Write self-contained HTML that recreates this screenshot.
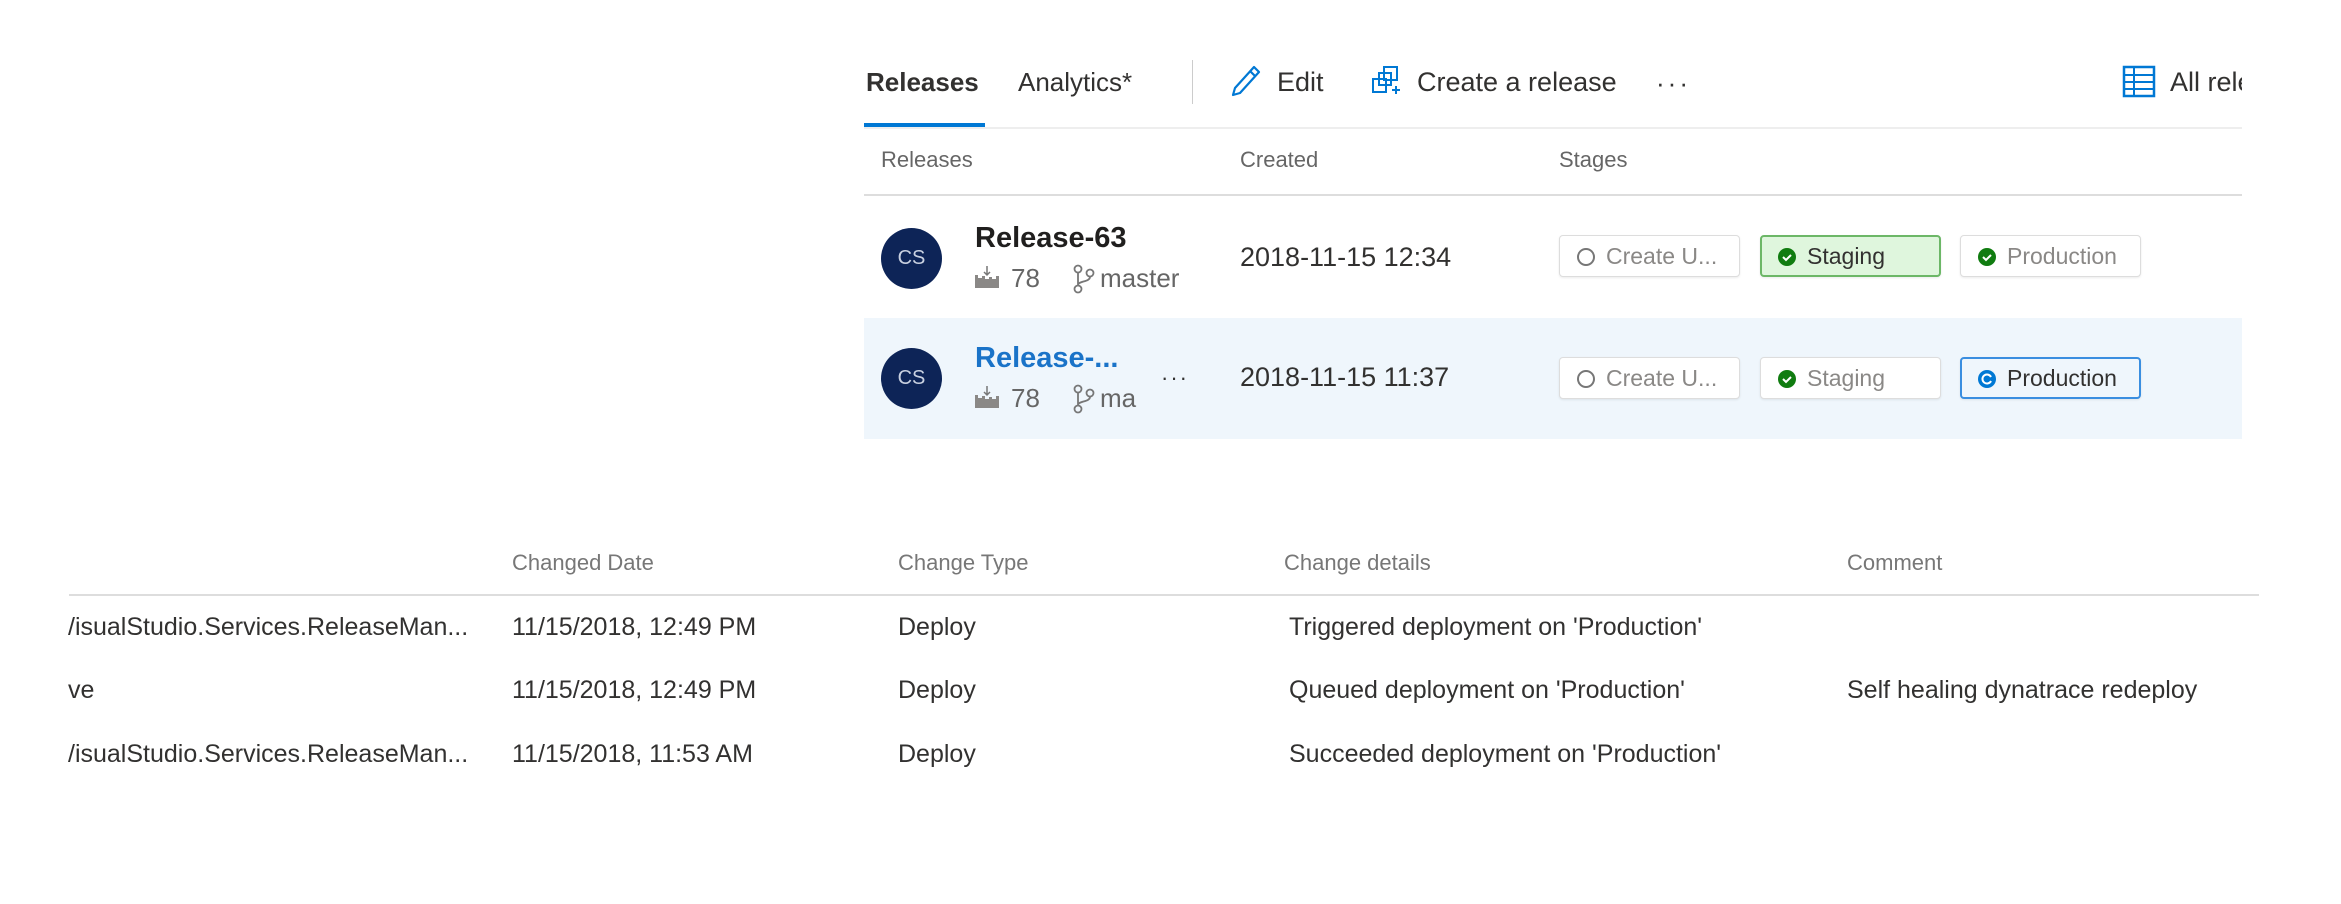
<!DOCTYPE html>
<html><head><meta charset="utf-8"><style>
body{margin:0;width:2341px;height:904px;background:#fff;position:relative;overflow:hidden;font-family:"Liberation Sans",sans-serif;color:#323130}
.a{position:absolute;white-space:nowrap}
.pill{position:absolute;height:42px;width:181px;border:1px solid #ddd;border-radius:4px;background:#fff;box-sizing:border-box;box-shadow:0 1px 2px rgba(0,0,0,.08)}
.pill span{position:absolute;left:46px;top:0;line-height:40px;font-size:23px;color:#8a8886}
.pill svg{position:absolute;left:16px;top:11px}
.hd{font-size:22px;color:#777}
.bt{font-size:25px;color:#323130}
</style></head><body>
<div class="a" style="left:866px;top:65px;font-size:26px;font-weight:bold;line-height:34px">Releases</div>
<div style="position:absolute;left:864px;top:123px;width:121px;height:4px;background:#0078d4"></div>
<div class="a" style="left:1018px;top:65px;font-size:26px;line-height:34px">Analytics*</div>
<div style="position:absolute;left:1192px;top:60px;width:1px;height:44px;background:#ccc"></div>
<svg class="a" style="left:1230px;top:64px" width="32" height="34" viewBox="0 0 32 34"><path d="M24 3l5 5L10 29l-7 2 2-7z M20 7l5 5" fill="none" stroke="#0078d4" stroke-width="2.2" stroke-linejoin="round"/></svg>
<div class="a" style="left:1277px;top:65px;font-size:27px;line-height:34px">Edit</div>
<svg class="a" style="left:1370px;top:64px" width="34" height="36" viewBox="0 0 34 36"><rect x="14" y="3" width="13" height="13" fill="none" stroke="#0078d4" stroke-width="2"/><rect x="3" y="15" width="13" height="13" fill="none" stroke="#0078d4" stroke-width="2"/><rect x="9" y="9" width="12" height="12" fill="none" stroke="#0078d4" stroke-width="2"/><path d="M26 22v8M22 26h8" stroke="#0078d4" stroke-width="2"/></svg>
<div class="a" style="left:1417px;top:65px;font-size:27px;line-height:34px">Create a release</div>
<div class="a" style="left:1656px;top:66px;font-size:26px;line-height:34px;letter-spacing:3px">···</div>
<svg class="a" style="left:2122px;top:65px" width="34" height="33" viewBox="0 0 34 33"><rect x="2" y="2" width="30" height="29" fill="none" stroke="#0078d4" stroke-width="2.5"/><path d="M2 10h30M2 17h30M2 24h30M12 2v29" stroke="#0078d4" stroke-width="2"/></svg>
<div style="position:absolute;left:2170px;top:65px;width:72px;overflow:hidden;font-size:27px;line-height:34px;white-space:nowrap">All releases</div>
<div style="position:absolute;left:864px;top:127px;width:1378px;height:2px;background:#eee"></div>
<div class="a hd" style="left:881px;top:147px;line-height:26px;color:#666">Releases</div>
<div class="a hd" style="left:1240px;top:147px;line-height:26px;color:#666">Created</div>
<div class="a hd" style="left:1559px;top:147px;line-height:26px;color:#666">Stages</div>
<div style="position:absolute;left:864px;top:194px;width:1378px;height:2px;background:#ddd"></div>
<div style="position:absolute;left:864px;top:318px;width:1378px;height:121px;background:#eff6fc"></div>
<div style="position:absolute;left:881px;top:228px;width:61px;height:61px;border-radius:50%;background:#0d2457;color:#c8d0e0;font-size:20px;line-height:61px;text-align:center">CS</div>
<div class="a" style="left:975px;top:221px;font-size:29px;font-weight:bold;line-height:34px;color:#201f1e">Release-63</div>
<svg class="a" style="left:974px;top:266px" width="26" height="22" viewBox="0 0 26 22"><path d="M13 0v9M10 6l3 3 3-3" stroke="#777" stroke-width="1.5" fill="none"/><path d="M1 9h3v3h4v-2h3v3h4v-2h3v2h4v-3h3v12H1z" fill="#8a8886"/></svg>
<div class="a" style="left:1011px;top:263px;font-size:26px;line-height:30px;color:#666">78</div>
<svg class="a" style="left:1072px;top:264px" width="24" height="30" viewBox="0 0 24 30"><circle cx="6" cy="5" r="3.5" fill="none" stroke="#777" stroke-width="1.8"/><circle cx="6" cy="25" r="3.5" fill="none" stroke="#777" stroke-width="1.8"/><circle cx="18" cy="9" r="3.5" fill="none" stroke="#777" stroke-width="1.8"/><path d="M6 9v12M18 13c0 5-12 4-12 8" fill="none" stroke="#777" stroke-width="1.8"/></svg>
<div class="a" style="left:1100px;top:263px;font-size:26px;line-height:30px;color:#666">master</div>
<div class="a" style="left:1240px;top:241px;font-size:27px;line-height:32px">2018-11-15 12:34</div>
<div style="position:absolute;left:881px;top:348px;width:61px;height:61px;border-radius:50%;background:#0d2457;color:#c8d0e0;font-size:20px;line-height:61px;text-align:center">CS</div>
<div class="a" style="left:975px;top:341px;font-size:29px;font-weight:bold;line-height:34px;color:#1a73c8">Release-...</div>
<svg class="a" style="left:974px;top:386px" width="26" height="22" viewBox="0 0 26 22"><path d="M13 0v9M10 6l3 3 3-3" stroke="#777" stroke-width="1.5" fill="none"/><path d="M1 9h3v3h4v-2h3v3h4v-2h3v2h4v-3h3v12H1z" fill="#8a8886"/></svg>
<div class="a" style="left:1011px;top:383px;font-size:26px;line-height:30px;color:#666">78</div>
<svg class="a" style="left:1072px;top:384px" width="24" height="30" viewBox="0 0 24 30"><circle cx="6" cy="5" r="3.5" fill="none" stroke="#777" stroke-width="1.8"/><circle cx="6" cy="25" r="3.5" fill="none" stroke="#777" stroke-width="1.8"/><circle cx="18" cy="9" r="3.5" fill="none" stroke="#777" stroke-width="1.8"/><path d="M6 9v12M18 13c0 5-12 4-12 8" fill="none" stroke="#777" stroke-width="1.8"/></svg>
<div class="a" style="left:1100px;top:383px;font-size:26px;line-height:30px;color:#666">ma</div>
<div class="a" style="left:1161px;top:366px;font-size:22px;line-height:24px;letter-spacing:2px">···</div>
<div class="a" style="left:1240px;top:361px;font-size:27px;line-height:32px">2018-11-15 11:37</div>
<div class="pill" style="left:1559px;top:235px"><svg width="20" height="20"><circle cx="10" cy="10" r="8" fill="none" stroke="#777" stroke-width="2"/></svg><span>Create U...</span></div>
<div class="pill" style="left:1760px;top:235px;background:#dff6dd;border:2px solid #6cb767"><svg width="20" height="20" style="left:15px;top:10px"><circle cx="10" cy="10" r="9" fill="#107c10"/><path d="M6 10l3 3 5-5" stroke="#fff" stroke-width="2" fill="none"/></svg><span style="color:#323130;left:45px;line-height:38px">Staging</span></div>
<div class="pill" style="left:1960px;top:235px"><svg width="20" height="20"><circle cx="10" cy="10" r="9" fill="#107c10"/><path d="M6 10l3 3 5-5" stroke="#fff" stroke-width="2" fill="none"/></svg><span>Production</span></div>
<div class="pill" style="left:1559px;top:357px"><svg width="20" height="20"><circle cx="10" cy="10" r="8" fill="none" stroke="#777" stroke-width="2"/></svg><span>Create U...</span></div>
<div class="pill" style="left:1760px;top:357px"><svg width="20" height="20"><circle cx="10" cy="10" r="9" fill="#107c10"/><path d="M6 10l3 3 5-5" stroke="#fff" stroke-width="2" fill="none"/></svg><span>Staging</span></div>
<div class="pill" style="left:1960px;top:357px;background:#eff6fc;border:2px solid #3a8ee0"><svg width="20" height="20" style="left:15px;top:10px"><circle cx="10" cy="10" r="9" fill="#0078d4"/><path d="M14 8a4.5 4.5 0 1 0 0 4" stroke="#fff" stroke-width="2" fill="none"/></svg><span style="color:#323130;left:45px;line-height:38px">Production</span></div>
<div class="a hd" style="left:512px;top:550px;line-height:26px">Changed Date</div>
<div class="a hd" style="left:898px;top:550px;line-height:26px">Change Type</div>
<div class="a hd" style="left:1284px;top:550px;line-height:26px">Change details</div>
<div class="a hd" style="left:1847px;top:550px;line-height:26px">Comment</div>
<div style="position:absolute;left:69px;top:594px;width:2190px;height:2px;background:#ddd"></div>
<div class="a bt" style="left:68px;top:612px;line-height:30px">/isualStudio.Services.ReleaseMan...</div>
<div class="a bt" style="left:512px;top:612px;line-height:30px">11/15/2018, 12:49 PM</div>
<div class="a bt" style="left:898px;top:612px;line-height:30px">Deploy</div>
<div class="a bt" style="left:1289px;top:612px;line-height:30px">Triggered deployment on 'Production'</div>
<div class="a bt" style="left:68px;top:675px;line-height:30px">ve</div>
<div class="a bt" style="left:512px;top:675px;line-height:30px">11/15/2018, 12:49 PM</div>
<div class="a bt" style="left:898px;top:675px;line-height:30px">Deploy</div>
<div class="a bt" style="left:1289px;top:675px;line-height:30px">Queued deployment on 'Production'</div>
<div class="a bt" style="left:1847px;top:675px;line-height:30px">Self healing dynatrace redeploy</div>
<div class="a bt" style="left:68px;top:739px;line-height:30px">/isualStudio.Services.ReleaseMan...</div>
<div class="a bt" style="left:512px;top:739px;line-height:30px">11/15/2018, 11:53 AM</div>
<div class="a bt" style="left:898px;top:739px;line-height:30px">Deploy</div>
<div class="a bt" style="left:1289px;top:739px;line-height:30px">Succeeded deployment on 'Production'</div>
</body></html>
